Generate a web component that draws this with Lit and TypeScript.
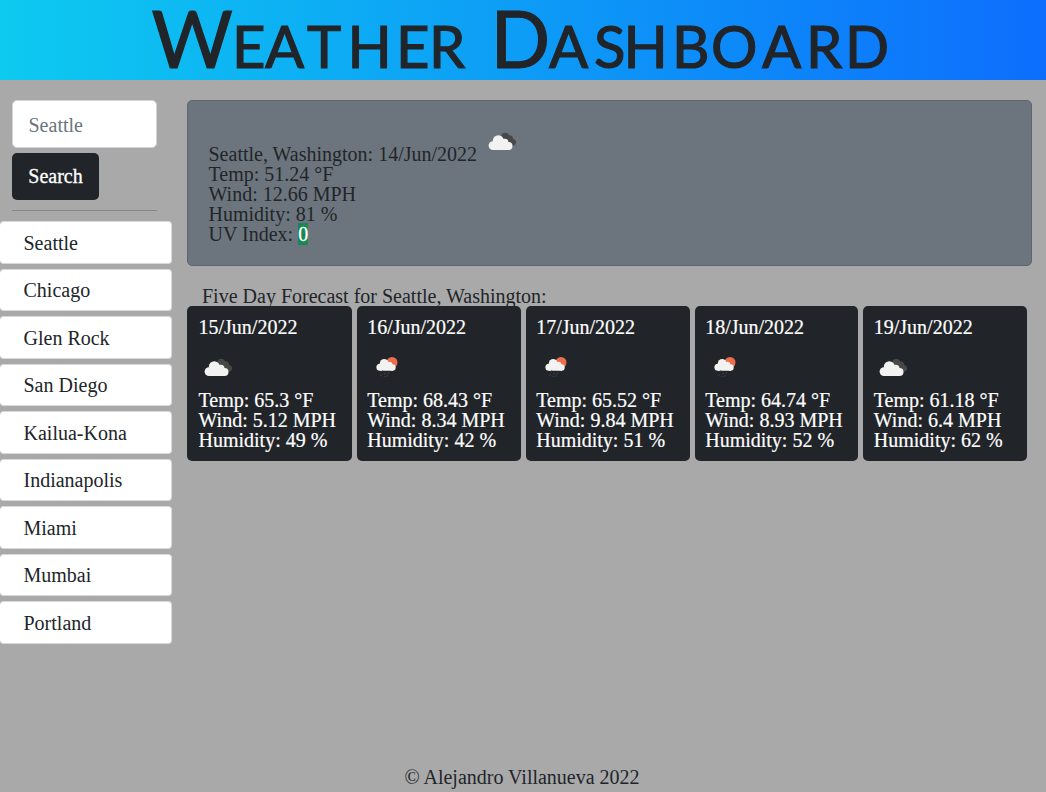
import { LitElement, html, css, svg } from "lit";
import { customElement, property } from "lit/decorators.js";

@customElement("weather-icon")
class WeatherIcon extends LitElement {
  @property() kind = "clouds";

  static styles = css`
    :host { display: block; width: 40px; height: 40px; }
    svg { display: block; width: 40px; height: 40px; overflow: visible; }
    .front { fill: #f2f2f0; }
    .back { fill: #484849; }
    .sun { fill: #ec6e4c; }
    .rain { stroke: #484849; stroke-width: 1; stroke-linecap: round; }
  `;

  render() {
    const clouds = svg`
      <g class="back">
        <circle cx="22.2" cy="16.6" r="3.9"/><circle cx="26.4" cy="19" r="3.8"/>
        <circle cx="29.6" cy="22.3" r="3.4"/><path d="M20 18L30 25.7L24 24Z"/>
      </g>
      <g class="front">
        <circle cx="10" cy="25.6" r="4.4"/><circle cx="15.3" cy="20.7" r="5.5"/>
        <circle cx="21.8" cy="22.4" r="3.7"/><circle cx="25.5" cy="26" r="4"/>
        <path d="M10 21.8H22L26 24V30H10Z"/>
      </g>`;
    const rain = svg`
      <circle class="sun" cx="25" cy="16.5" r="5.5"/>
      <g class="front">
        <circle cx="12.9" cy="21.2" r="3.5"/><circle cx="17.2" cy="17.3" r="4.4"/>
        <circle cx="22.4" cy="18.8" r="3"/><circle cx="25.5" cy="21.5" r="3.2"/>
        <path d="M12.9 18.2H22.5L26 20V24.7H12.9Z"/>
      </g>
      <path class="rain" d="M15.6 24.7l-.4.9M14.1 28.6l-.3.7M18.3 27.1l-.5 1M21.6 26.7l-.3.7M17.3 30.4l-.2.3M20.3 29.5l-.4.8"/>`;
    return html`<svg viewBox="0 0 40 40">${this.kind === "rain" ? rain : clouds}</svg>`;
  }
}

interface Day { date: string; icon: string; temp: string; wind: string; humidity: string; }

@customElement("app-root")
class AppRoot extends LitElement {
  cities = ["Seattle", "Chicago", "Glen Rock", "San Diego", "Kailua-Kona", "Indianapolis", "Miami", "Mumbai", "Portland"];

  days: Day[] = [
    { date: "15/Jun/2022", icon: "clouds", temp: "65.3", wind: "5.12", humidity: "49" },
    { date: "16/Jun/2022", icon: "rain", temp: "68.43", wind: "8.34", humidity: "42" },
    { date: "17/Jun/2022", icon: "rain", temp: "65.52", wind: "9.84", humidity: "51" },
    { date: "18/Jun/2022", icon: "rain", temp: "64.74", wind: "8.93", humidity: "52" },
    { date: "19/Jun/2022", icon: "clouds", temp: "61.18", wind: "6.4", humidity: "62" },
  ];

  static styles = css`
    :host {
      display: flex; flex-direction: column; height: 792px; overflow: hidden;
      background: #a9a9a9; color: #212529;
      font: 20px/20px "Liberation Serif", "Times New Roman", serif;
    }
    * { box-sizing: border-box; }
    header { height: 80px; flex: none; background: linear-gradient(to right, #0dcaf0, #0d6efd); }
    h1 { margin: 0; height: 80px; font-weight: 400; }
    h1 svg { display: block; width: 1046px; height: 80px; overflow: visible; }
    .title {
      font-family: "Lato", sans-serif; font-weight: 400; font-size: 58px;
      fill: #212529; stroke: #212529; stroke-width: 1.2px;
    }
    .cap { font-size: 78.5px; }
    main { flex: 1; display: flex; padding-top: 20px; }
    aside { width: 172px; flex: none; }
    .search { padding: 0 15px 0 12px; display: flex; flex-direction: column; align-items: flex-start; }
    input {
      width: 145px; height: 48px; padding: 2px 15.5px 0; border: 1px solid #ced4da; border-radius: 5px;
      background: #fff; font: inherit; color: #212529; outline: none;
    }
    input::placeholder { color: #6c757d; opacity: 1; }
    button {
      margin-top: 5px; width: 87px; height: 47px; padding: 0 0 2px; border: 0; border-radius: 5px;
      background: #212529; color: #fff; font: inherit; -webkit-text-stroke: 0.3px #fff;
    }
    .rule { width: 145px; height: 1px; margin: 10px 0; background: #868788; }
    ul { list-style: none; margin: 0; padding: 0; display: flex; flex-direction: column; gap: 5px; }
    li {
      height: 42.5px; padding: 10.6px 23.5px 0; background: #fff; border: 1px solid #d9d9d9;
      border-left: 0; border-radius: 4px;
    }
    .content { width: 845px; margin-left: 15px; }
    .current {
      height: 166px; padding: 21px 21px 0 20.5px; background: #6c757d; border: 1px solid #5f676e; border-radius: 5px;
    }
    .place { display: flex; height: 42px; align-items: flex-end; }
    .place weather-icon { margin: 0 0 4px 5.6px; }
    .uv { background: #198754; color: #fff; -webkit-text-stroke: 0.3px #fff; }
    h2 { margin: 20px 0 0 15px; height: 20px; font: inherit; }
    .days { display: grid; grid-template-columns: 164.8px 164px 164px 163.6px 163.6px; gap: 5px; }
    .card {
      height: 155px; padding: 11px 0 0 10.4px; background: #212529; color: #fff; border-radius: 5px;
      white-space: nowrap; -webkit-text-stroke: 0.2px #fff;
    }
    .card:first-child { padding-left: 11.5px; }
    .card weather-icon { margin: 9px 0 4px; }
    footer { flex: none; height: 25px; text-align: center; padding-right: 2px; }
  `;

  render() {
    return html`
      <header>
        <h1>
          <svg viewBox="0 0 1046 80">
            <text class="title" y="68.3"><tspan class="cap" x="151.5">W</tspan><tspan x="232 265 307 347.5 396 429">EATHER</tspan> <tspan class="cap" x="490.5">D</tspan><tspan x="549 594 623.5 672 711 762 806 845">ASHBOARD</tspan></text>
          </svg>
        </h1>
      </header>
      <main>
        <aside>
          <div class="search">
            <input placeholder="Seattle" />
            <button>Search</button>
            <div class="rule"></div>
          </div>
          <ul>${this.cities.map((c) => html`<li>${c}</li>`)}</ul>
        </aside>
        <div class="content">
          <section class="current">
            <div class="place"><span>Seattle, Washington: 14/Jun/2022</span><weather-icon></weather-icon></div>
            <div>Temp: 51.24 °F</div>
            <div>Wind: 12.66 MPH</div>
            <div>Humidity: 81 %</div>
            <div>UV Index: <span class="uv">0</span></div>
          </section>
          <h2>Five Day Forecast for Seattle, Washington:</h2>
          <section class="days">
            ${this.days.map((d) => html`
              <article class="card">
                <div>${d.date}</div>
                <weather-icon kind=${d.icon}></weather-icon>
                <div>Temp: ${d.temp} °F</div>
                <div>Wind: ${d.wind} MPH</div>
                <div>Humidity: ${d.humidity} %</div>
              </article>`)}
          </section>
        </div>
      </main>
      <footer>© Alejandro Villanueva 2022</footer>
    `;
  }
}
